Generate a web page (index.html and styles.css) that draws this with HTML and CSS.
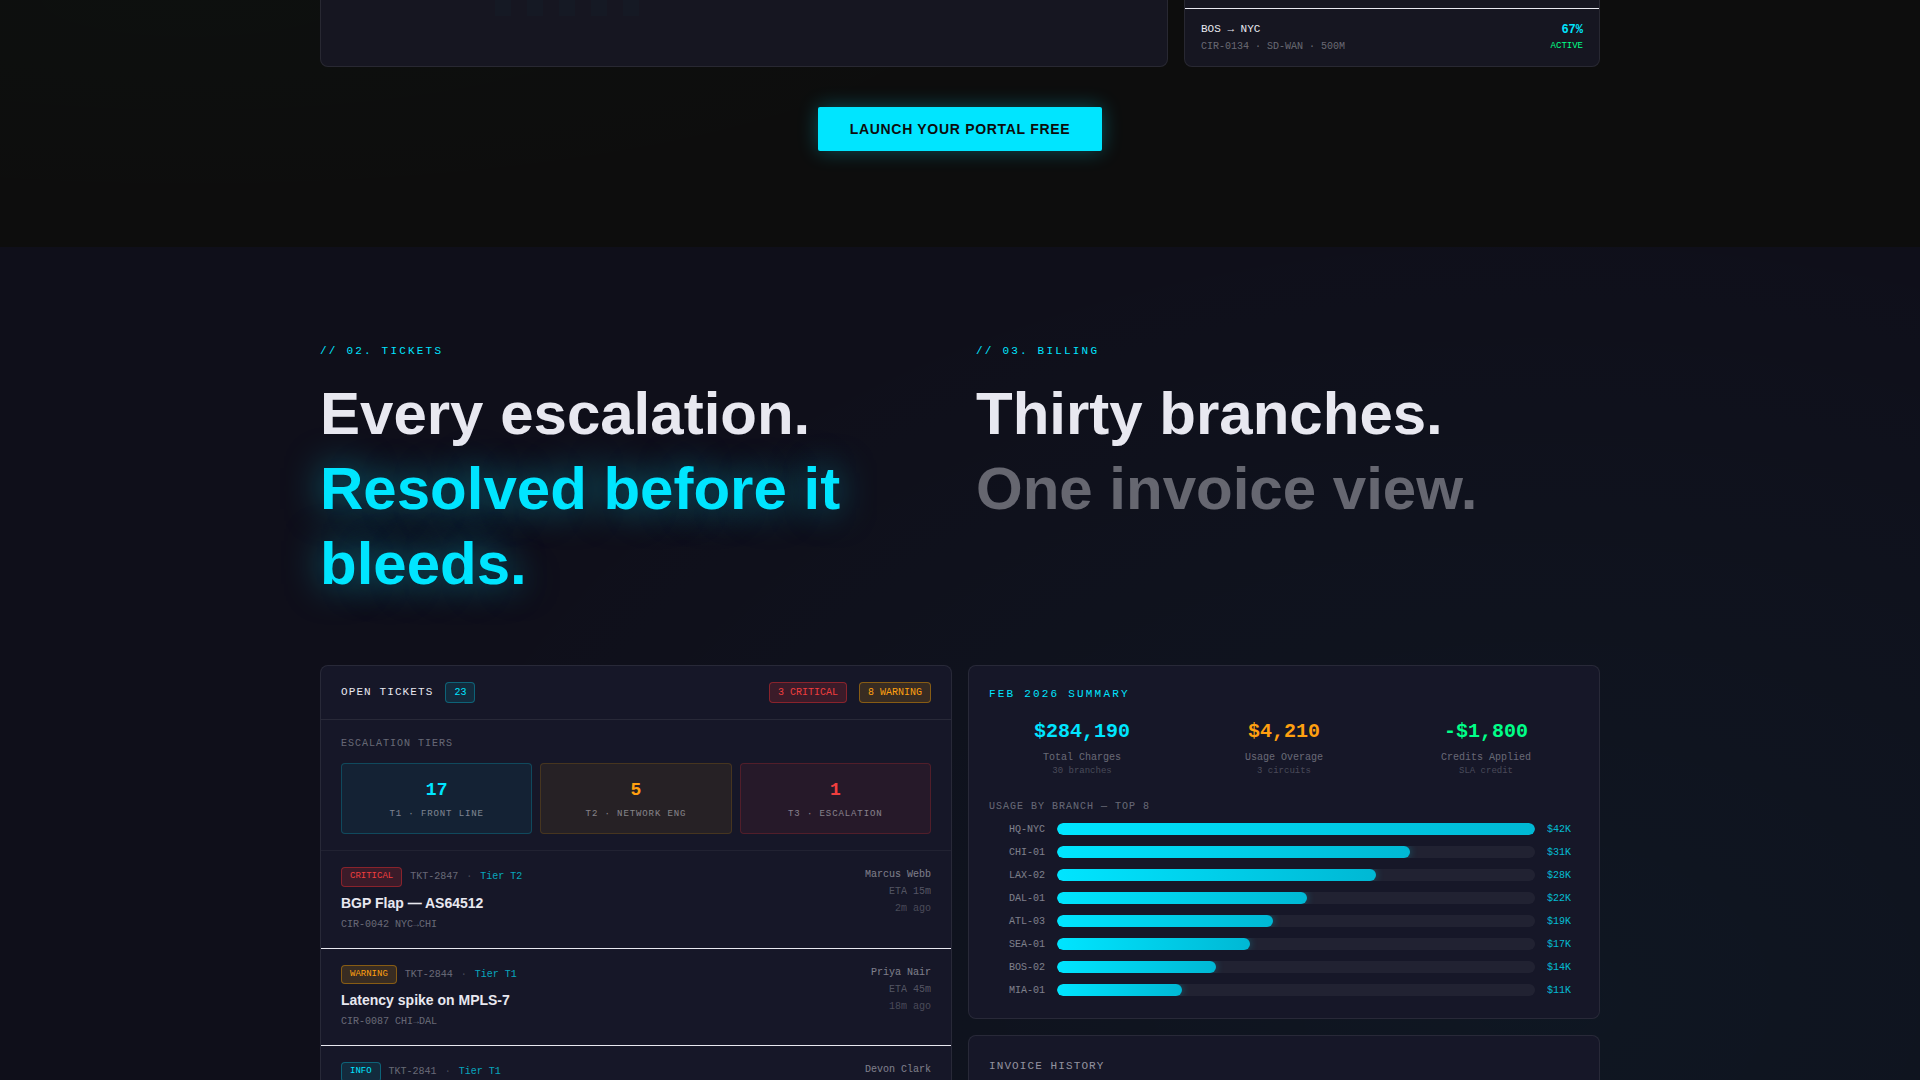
FILE: index.html
```html
<!DOCTYPE html>
<html lang="en">
<head>
<meta charset="UTF-8">
<meta name="viewport" content="width=device-width, initial-scale=1.0">
<title>Network Portal</title>
<link rel="stylesheet" href="styles.css">
</head>
<body>
    <section class="overview">
        <div class="container">
            <div class="overview-grid">
                <div class="card map-card">
                    <div class="map-bars">
                        <span></span><span></span><span></span><span></span><span></span>
                    </div>
                </div>
                <div class="card circuits">
                    <div class="circuit">
                        <div>
                            <p class="circuit-route">BOS → NYC</p>
                            <p class="circuit-meta">CIR-0134 · SD-WAN · 500M</p>
                        </div>
                        <div class="circuit-right">
                            <p class="circuit-load">67%</p>
                            <p class="circuit-status">ACTIVE</p>
                        </div>
                    </div>
                </div>
            </div>
            <div class="cta-row">
                <a class="cta">LAUNCH YOUR PORTAL FREE</a>
            </div>
        </div>
    </section>

    <section class="operations">
        <div class="container">
            <div class="headings">
                <div>
                    <p class="eyebrow">// 02. TICKETS</p>
                    <h2>Every escalation.<br><span class="glow">Resolved before it bleeds.</span></h2>
                </div>
                <div>
                    <p class="eyebrow">// 03. BILLING</p>
                    <h2>Thirty branches.<br><span class="dim">One invoice view.</span></h2>
                </div>
            </div>

            <div class="panels">
                <div class="card tickets">
                    <div class="tickets-header">
                        <div class="group">
                            <span class="panel-title">OPEN TICKETS</span>
                            <span class="badge cyan">23</span>
                        </div>
                        <div class="group">
                            <span class="badge red">3 CRITICAL</span>
                            <span class="badge amber">8 WARNING</span>
                        </div>
                    </div>
                    <div class="tiers">
                        <p class="label">ESCALATION TIERS</p>
                        <div class="tier-grid">
                            <div class="tier tier-1">
                                <p class="tier-count">17</p>
                                <p class="tier-name">T1 · FRONT LINE</p>
                            </div>
                            <div class="tier tier-2">
                                <p class="tier-count">5</p>
                                <p class="tier-name">T2 · NETWORK ENG</p>
                            </div>
                            <div class="tier tier-3">
                                <p class="tier-count">1</p>
                                <p class="tier-name">T3 · ESCALATION</p>
                            </div>
                        </div>
                    </div>
                    <div class="ticket">
                        <div>
                            <div class="ticket-meta">
                                <span class="badge small red">CRITICAL</span>
                                <span>TKT-2847</span>
                                <span class="dot">·</span>
                                <span class="ticket-tier">Tier T2</span>
                            </div>
                            <h3>BGP Flap — AS64512</h3>
                            <p class="ticket-circuit">CIR-0042 NYC→CHI</p>
                        </div>
                        <div class="ticket-side">
                            <p class="owner">Marcus Webb</p>
                            <p class="eta">ETA 15m</p>
                            <p class="ago">2m ago</p>
                        </div>
                    </div>
                    <div class="ticket">
                        <div>
                            <div class="ticket-meta">
                                <span class="badge small amber">WARNING</span>
                                <span>TKT-2844</span>
                                <span class="dot">·</span>
                                <span class="ticket-tier">Tier T1</span>
                            </div>
                            <h3>Latency spike on MPLS-7</h3>
                            <p class="ticket-circuit">CIR-0087 CHI→DAL</p>
                        </div>
                        <div class="ticket-side">
                            <p class="owner">Priya Nair</p>
                            <p class="eta">ETA 45m</p>
                            <p class="ago">18m ago</p>
                        </div>
                    </div>
                    <div class="ticket">
                        <div>
                            <div class="ticket-meta">
                                <span class="badge small cyan">INFO</span>
                                <span>TKT-2841</span>
                                <span class="dot">·</span>
                                <span class="ticket-tier">Tier T1</span>
                            </div>
                        </div>
                        <div class="ticket-side">
                            <p class="owner">Devon Clark</p>
                        </div>
                    </div>
                </div>

                <div class="billing">
                    <div class="card summary">
                        <p class="summary-title">FEB 2026 SUMMARY</p>
                        <div class="totals">
                            <div>
                                <p class="amount text-cyan">$284,190</p>
                                <p class="amount-label">Total Charges</p>
                                <p class="amount-note">30 branches</p>
                            </div>
                            <div>
                                <p class="amount text-amber">$4,210</p>
                                <p class="amount-label">Usage Overage</p>
                                <p class="amount-note">3 circuits</p>
                            </div>
                            <div>
                                <p class="amount text-green">-$1,800</p>
                                <p class="amount-label">Credits Applied</p>
                                <p class="amount-note">SLA credit</p>
                            </div>
                        </div>
                        <p class="label usage-label">USAGE BY BRANCH — TOP 8</p>
                        <div class="usage">
                            <div class="usage-row"><span class="branch">HQ-NYC</span><div class="track"><div class="fill" style="width: 100%"></div></div><span class="cost">$42K</span></div>
                            <div class="usage-row"><span class="branch">CHI-01</span><div class="track"><div class="fill" style="width: 73.81%"></div></div><span class="cost">$31K</span></div>
                            <div class="usage-row"><span class="branch">LAX-02</span><div class="track"><div class="fill" style="width: 66.67%"></div></div><span class="cost">$28K</span></div>
                            <div class="usage-row"><span class="branch">DAL-01</span><div class="track"><div class="fill" style="width: 52.38%"></div></div><span class="cost">$22K</span></div>
                            <div class="usage-row"><span class="branch">ATL-03</span><div class="track"><div class="fill" style="width: 45.24%"></div></div><span class="cost">$19K</span></div>
                            <div class="usage-row"><span class="branch">SEA-01</span><div class="track"><div class="fill" style="width: 40.48%"></div></div><span class="cost">$17K</span></div>
                            <div class="usage-row"><span class="branch">BOS-02</span><div class="track"><div class="fill" style="width: 33.33%"></div></div><span class="cost">$14K</span></div>
                            <div class="usage-row"><span class="branch">MIA-01</span><div class="track"><div class="fill" style="width: 26.19%"></div></div><span class="cost">$11K</span></div>
                        </div>
                    </div>
                    <div class="card invoices">
                        <p class="panel-title">INVOICE HISTORY</p>
                    </div>
                </div>
            </div>
        </div>
    </section>
</body>
</html>
```
FILE: styles.css
```css
* {
    margin: 0;
    padding: 0;
    box-sizing: border-box;
}
body {
    height: 1080px;
    overflow: hidden;
    font-family: "Liberation Mono", monospace;
    font-size: 10px;
    line-height: 1.5;
    color: #e8e8f0;
    background-color: #0d0d0d;
}
.container {
    width: 1280px;
    margin: 0 auto;
}
.card {
    border: 1px solid rgba(255, 255, 255, 0.08);
    border-radius: 8px;
    background-color: #161728;
}

/* overview */
.overview {
    height: 247.3px;
    background: radial-gradient(ellipse 900px 220px at 10% 0%, rgba(0, 255, 136, 0.012), transparent), #0d0d0d;
}
.overview-grid {
    display: grid;
    grid-template-columns: 848px 416px;
    gap: 16px;
    height: 67px;
}
.overview .card {
    border-top: none;
    border-radius: 0 0 8px 8px;
    background-color: #161621;
}
.map-bars {
    display: flex;
    gap: 16px;
    padding-left: 174px;
}
.map-bars span {
    width: 16px;
    height: 16px;
    background-color: rgba(0, 229, 255, 0.015);
}
.circuits {
    padding-top: 8px;
}
.circuit {
    display: flex;
    justify-content: space-between;
    padding: 12px 16px 11px;
    border-top: 1px solid #e8e8f0;
}
.circuit-route {
    font-size: 11px;
    margin-bottom: 1px;
}
.circuit-meta {
    color: rgba(232, 232, 240, 0.4);
}
.circuit-right {
    text-align: right;
}
.circuit-load {
    font-size: 12px;
    font-weight: 700;
    margin-bottom: 1px;
    color: #00e5ff;
}
.circuit-status {
    font-size: 9px;
    color: #00ff88;
}
.cta-row {
    display: flex;
    justify-content: center;
    padding-top: 40px;
}
.cta {
    padding: 11.5px 32px;
    border-radius: 2px;
    font-family: "Liberation Sans", sans-serif;
    font-size: 14px;
    font-weight: 700;
    letter-spacing: 0.7px;
    color: #0d0d0d;
    background-color: #00e5ff;
    box-shadow: 0 0 20px rgba(0, 229, 255, 0.3);
}

/* tickets and billing */
.operations {
    height: 832.7px;
    padding-top: 96px;
    overflow: hidden;
    background: radial-gradient(ellipse 1200px 800px at 80% 90%, rgba(0, 229, 255, 0.035), transparent), #0f0f1a;
}
.headings {
    display: grid;
    grid-template-columns: 1fr 1fr;
    gap: 32px;
    margin-bottom: 64.3px;
}
.eyebrow {
    margin-bottom: 16px;
    font-size: 11px;
    letter-spacing: 2.2px;
    color: #00e5ff;
}
h2 {
    font-family: "Liberation Sans", sans-serif;
    font-size: 60px;
    line-height: 75px;
    font-weight: 700;
}
.glow {
    color: #00e5ff;
    text-shadow: 0 0 36px rgba(0, 229, 255, 0.5);
}
.dim {
    color: rgba(232, 232, 240, 0.4);
}
.panels {
    display: grid;
    grid-template-columns: 1fr 1fr;
    gap: 16px;
}
.panel-title {
    font-size: 11px;
    letter-spacing: 1.1px;
}
.label {
    letter-spacing: 1px;
    color: rgba(232, 232, 240, 0.4);
}
.badge {
    padding: 2px 8px;
    border: 1px solid;
    border-radius: 4px;
}
.small {
    font-size: 9px;
}
.cyan {
    color: #00e5ff;
    background-color: rgba(0, 229, 255, 0.1);
    border-color: rgba(0, 229, 255, 0.3);
}
.red {
    color: #f03e3e;
    background-color: rgba(255, 51, 51, 0.16);
    border-color: rgba(255, 51, 51, 0.4);
}
.amber {
    color: #ffa010;
    background-color: rgba(255, 165, 0, 0.15);
    border-color: rgba(255, 165, 0, 0.4);
}
.text-cyan {
    color: #00e5ff;
}
.text-amber {
    color: #ffa010;
}
.text-green {
    color: #00ff88;
}
.tickets-header {
    display: flex;
    justify-content: space-between;
    padding: 16px 20px;
    border-bottom: 1px solid rgba(255, 255, 255, 0.08);
}
.group {
    display: flex;
    align-items: center;
    gap: 12px;
}
.tiers {
    padding: 16px 20px;
    border-bottom: 1px solid rgba(255, 255, 255, 0.05);
}
.tier-grid {
    display: grid;
    grid-template-columns: repeat(3, 1fr);
    gap: 8px;
    margin-top: 12px;
}
.tier {
    padding: 13px 12px 11.5px;
    border: 1px solid;
    border-radius: 4px;
    text-align: center;
}
.tier-1 {
    color: #00e5ff;
    background-color: rgba(0, 229, 255, 0.06);
    border-color: rgba(0, 229, 255, 0.2);
}
.tier-2 {
    color: #ffa010;
    background-color: rgba(255, 165, 0, 0.07);
    border-color: rgba(255, 165, 0, 0.15);
}
.tier-3 {
    color: #f03e3e;
    background-color: rgba(255, 51, 51, 0.07);
    border-color: rgba(255, 51, 51, 0.2);
}
.tier-count {
    font-size: 18px;
    font-weight: 700;
    margin-bottom: 4px;
}
.tier-name {
    font-size: 9px;
    letter-spacing: 0.9px;
    color: rgba(232, 232, 240, 0.5);
}
.ticket {
    display: flex;
    justify-content: space-between;
    height: 97.5px;
    padding: 16px 20px;
    border-bottom: 1px solid #e8e8f0;
}
.ticket-meta {
    display: flex;
    gap: 8px;
    align-items: center;
    margin-bottom: 6px;
    color: rgba(232, 232, 240, 0.4);
}
.dot {
    color: rgba(232, 232, 240, 0.25);
}
.ticket-tier {
    color: rgba(0, 229, 255, 0.7);
}
h3 {
    font-family: "Liberation Sans", sans-serif;
    font-size: 14px;
    font-weight: 700;
    margin-bottom: 3px;
}
.ticket-circuit {
    color: rgba(232, 232, 240, 0.4);
}
.ticket-side {
    text-align: right;
}
.ticket-side p {
    margin-bottom: 2px;
}
.owner {
    color: rgba(232, 232, 240, 0.5);
}
.eta {
    color: rgba(232, 232, 240, 0.3);
}
.ago {
    color: rgba(232, 232, 240, 0.25);
}

/* billing */
.billing {
    display: flex;
    flex-direction: column;
    gap: 16px;
}
.summary {
    padding: 20px;
}
.summary-title {
    margin-bottom: 14.7px;
    font-size: 11px;
    letter-spacing: 2.2px;
    color: #00e5ff;
}
.totals {
    display: grid;
    grid-template-columns: repeat(3, 1fr);
    gap: 16px;
    margin-bottom: 20px;
    text-align: center;
}
.amount {
    font-size: 20px;
    font-weight: 700;
    margin-bottom: 3px;
}
.amount-label {
    color: rgba(232, 232, 240, 0.4);
}
.amount-note {
    font-size: 9px;
    color: rgba(232, 232, 240, 0.25);
}
.usage-label {
    margin-bottom: 8px;
}
.usage {
    display: flex;
    flex-direction: column;
    gap: 8px;
}
.usage-row {
    display: flex;
    align-items: center;
    gap: 12px;
}
.branch {
    width: 56px;
    text-align: right;
    color: rgba(232, 232, 240, 0.5);
}
.track {
    flex: 1;
    height: 12px;
    border-radius: 6px;
    background-color: rgba(255, 255, 255, 0.05);
    overflow: hidden;
}
.fill {
    height: 100%;
    border-radius: 6px;
    background: linear-gradient(90deg, #00e5ff, #00b8d4);
    box-shadow: 0 0 8px rgba(0, 229, 255, 0.3);
}
.cost {
    width: 32px;
    color: rgba(0, 229, 255, 0.8);
}
.invoices {
    height: 200px;
    padding: 22px 20px;
    color: rgba(232, 232, 240, 0.6);
}
```
